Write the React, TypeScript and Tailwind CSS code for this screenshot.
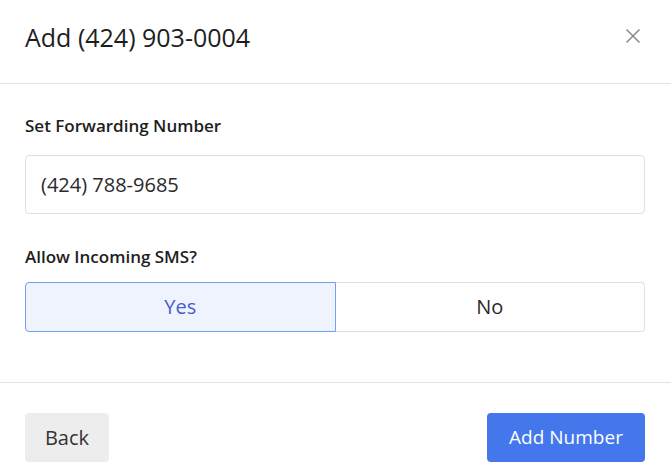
import React from "react";

export default function App() {
  return (
    <div
      className="w-[671px] h-[476px] bg-white text-[#222] overflow-hidden"
      style={{ fontFamily: "'Open Sans', 'Noto Sans', sans-serif" }}
    >
      <div className="h-[84px] border-b border-[#e2e2e2] flex items-center justify-between pl-[25px] pr-[26px]">
        <h1 className="text-[25px] font-medium text-[#1e1e1e] leading-none mb-[8px]">Add (424) 903-0004</h1>
        <button className="text-[#8a8a8a] mr-[4px] mb-[12px]">
          <svg width="16" height="16" viewBox="0 0 16 16" fill="none" stroke="currentColor" strokeWidth="1.5">
            <path d="M1.5 1.5L14.5 14.5M14.5 1.5L1.5 14.5" />
          </svg>
        </button>
      </div>
      <div className="h-[299px] border-b border-[#e2e2e2] pl-[25px] pr-[26px] pt-[32px]">
        <div className="text-[17px] font-semibold leading-[20px] text-[#1e1e1e]">Set Forwarding Number</div>
        <div className="mt-[19px] h-[59px] border border-[#e0e0e0] rounded-[4px] flex items-center px-[15px] text-[20px] text-[#2a2a2a]">
          (424) 788-9685
        </div>
        <div className="mt-[33px] text-[17px] font-semibold leading-[20px] text-[#1e1e1e]">Allow Incoming SMS?</div>
        <div className="mt-[15px] flex h-[50px]">
          <div className="flex-1 flex items-center justify-center bg-[#eef3fe] border border-[#6fa0f4] rounded-l-[4px] text-[20px] text-[#4a5bc9]">
            Yes
          </div>
          <div className="flex-1 flex items-center justify-center border border-l-0 border-[#e0e0e0] rounded-r-[4px] text-[20px] text-[#2a2a2a]">
            No
          </div>
        </div>
      </div>
      <div className="flex justify-between pl-[25px] pr-[26px] pt-[30px]">
        <button className="h-[49px] w-[84px] bg-[#ededed] rounded-[4px] text-[20px] text-[#333]">Back</button>
        <button className="h-[49px] w-[158px] bg-[#4476ec] rounded-[4px] text-[19px] font-medium text-white">Add Number</button>
      </div>
    </div>
  );
}
